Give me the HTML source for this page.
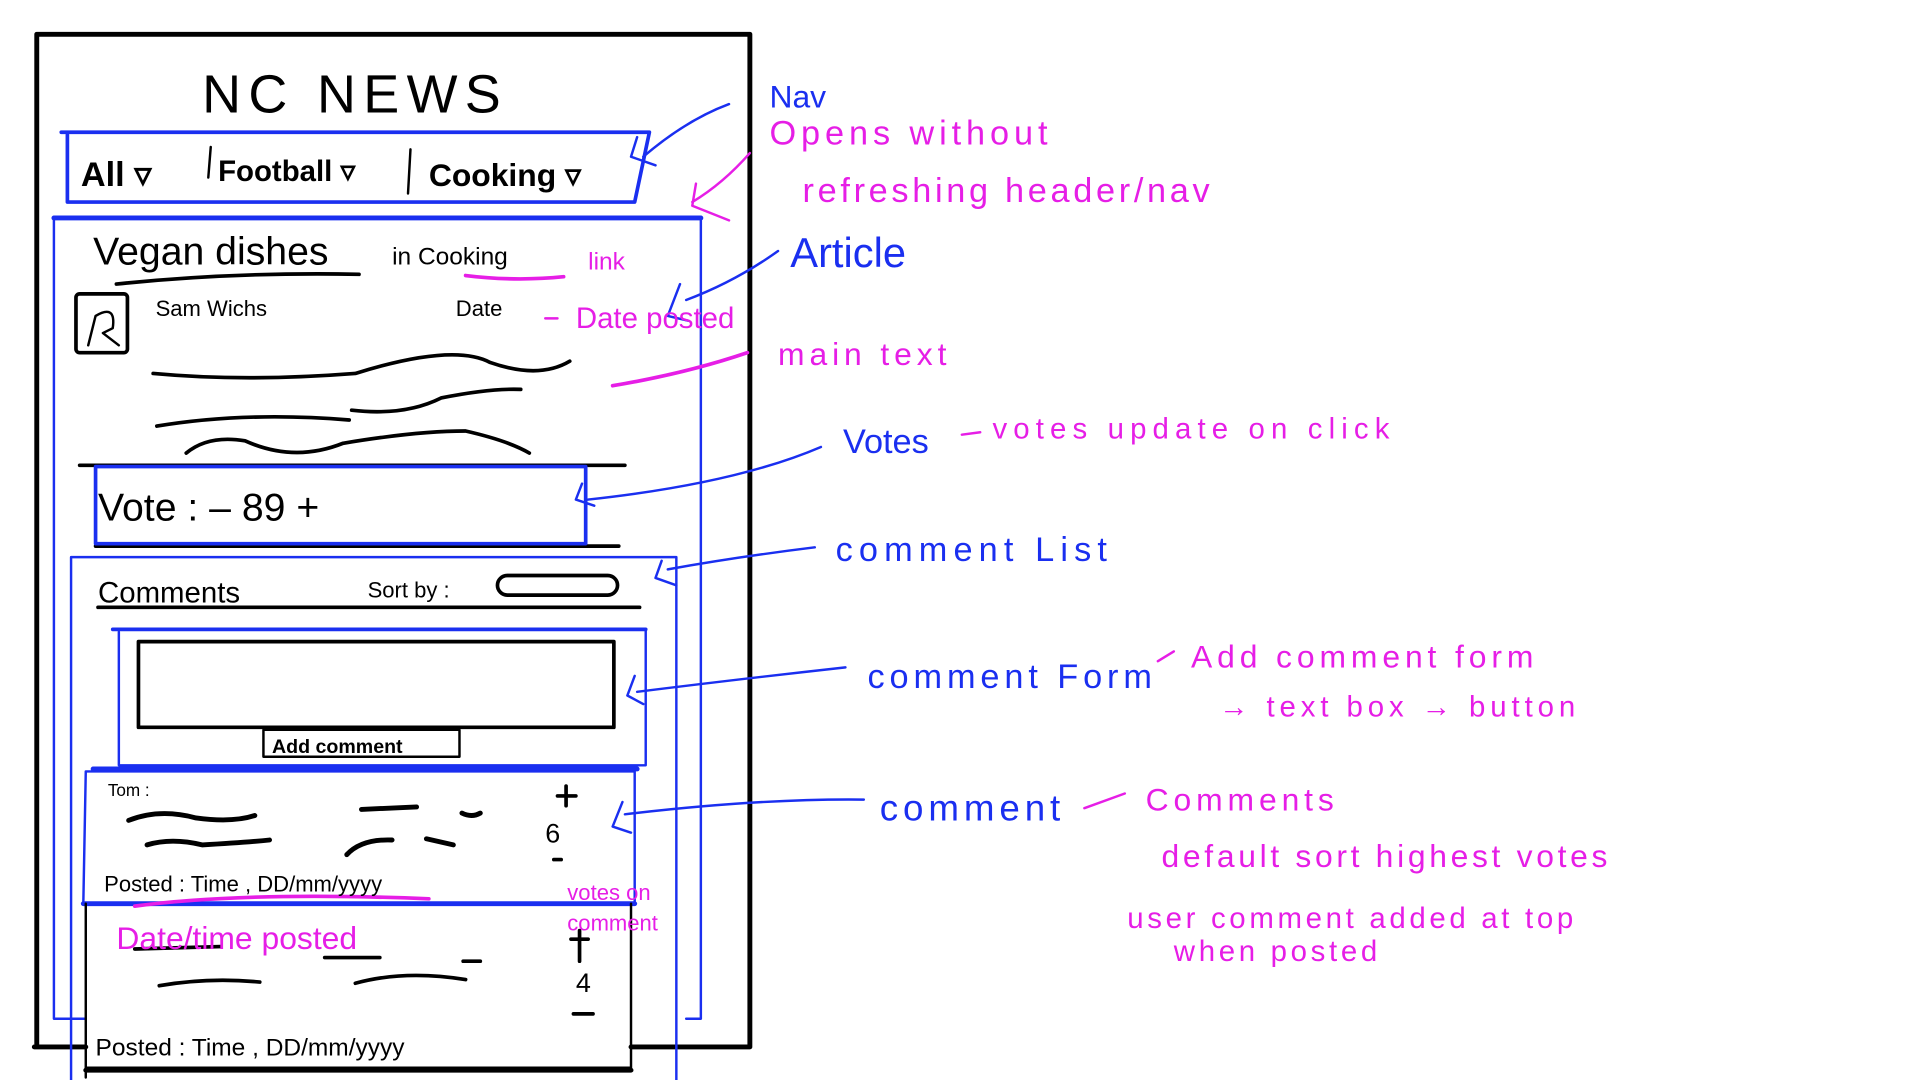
<!DOCTYPE html>
<html><head><meta charset="utf-8"><style>html,body{margin:0;padding:0;background:#fff;overflow:hidden}svg{display:block}
text{font-family:"Liberation Sans",sans-serif}</style></head><body>
<svg width="1920" height="1080" viewBox="0 0 1567 882" preserveAspectRatio="none" xmlns="http://www.w3.org/2000/svg">
<rect width="1567" height="882" fill="#fff"/>
<g fill="none" stroke-linecap="round" stroke-linejoin="round">
<path d="M30 28 L612 28 L612 855 M30 28 L30 855 M28 855 L70 855 M515 855 L612 855" stroke="#000" stroke-width="4"/>
<path d="M50 108 L530 108 L518 165 L55 165 L55 110" stroke="#1a2ff0" stroke-width="3"/>
<path d="M335 122 L333 158 M172 120 L170 145" stroke="#000" stroke-width="2"/>
<path d="M44 178 L572 178 L572 832 M44 178 L44 832 L70 832 M560 832 L572 832" stroke="#1a2ff0" stroke-width="2"/>
<path d="M44 178 L572 178" stroke="#1a2ff0" stroke-width="4"/>
<path d="M95 232 Q190 222 293 224" stroke="#000" stroke-width="3"/>
<path d="M380 225 Q420 230 460 226" stroke="#e61ee6" stroke-width="3"/>
<rect x="62" y="240" width="42" height="48" rx="3" stroke="#000" stroke-width="3"/>
<path d="M72 282 L78 258 Q95 248 92 268 L84 272 L97 282" stroke="#000" stroke-width="2"/>
<path d="M125 305 Q200 312 290 305 Q370 280 400 296 Q440 310 465 295" stroke="#000" stroke-width="3"/>
<path d="M128 348 Q200 336 285 343 M287 335 Q330 340 360 325 Q400 317 425 318" stroke="#000" stroke-width="3"/>
<path d="M152 370 Q170 355 200 360 Q240 378 280 362 Q340 352 380 352 Q415 360 432 370" stroke="#000" stroke-width="3"/>
<path d="M65 380 L510 380 M78 446 L505 446" stroke="#000" stroke-width="3"/>
<path d="M78 381 L478 381 L478 444 L78 444 Z" stroke="#1a2ff0" stroke-width="3"/>
<path d="M58 455 L552 455 L552 882 M58 455 L58 882" stroke="#1a2ff0" stroke-width="2"/>
<path d="M80 496 L522 496" stroke="#000" stroke-width="3"/>
<rect x="406" y="470" width="98" height="16" rx="8" stroke="#000" stroke-width="3"/>
<path d="M92 514 L527 514 L527 625 L97 625 L97 516" stroke="#1a2ff0" stroke-width="2"/>
<path d="M92 514 L527 514" stroke="#1a2ff0" stroke-width="3"/>
<rect x="113" y="524" width="388" height="70" stroke="#000" stroke-width="3"/>
<rect x="215" y="596" width="160" height="22" stroke="#000" stroke-width="2"/>
<path d="M76 628 L520 628" stroke="#1a2ff0" stroke-width="4"/>
<path d="M70 630 L518 630 L518 738 L68 738 L70 630" stroke="#1a2ff0" stroke-width="2"/>
<path d="M68 738 L518 738" stroke="#1a2ff0" stroke-width="4"/>
<path d="M105 670 Q130 660 160 668 Q190 672 208 666 M120 690 Q140 684 165 690 Q200 688 220 686 M295 661 L340 659 M377 664 Q385 668 392 664 M283 698 Q295 685 320 686 M348 685 L370 690" stroke="#000" stroke-width="4"/>
<path d="M110 740 Q200 728 350 734" stroke="#e61ee6" stroke-width="3"/>
<path d="M462 642 L462 658 M455 650 L470 650 M452 702 L458 702" stroke="#000" stroke-width="3"/>
<path d="M70 738 L70 880 M515 738 L515 872 L70 872" stroke="#000" stroke-width="2"/>
<path d="M70 874 L515 874" stroke="#000" stroke-width="4"/>
<path d="M110 775 L180 773 M265 782 L310 782 M378 785 L392 785 M130 805 Q170 798 212 802 M290 803 Q330 792 380 800" stroke="#000" stroke-width="3"/>
<path d="M466 767 L480 767 M473 760 L473 785 M468 828 L484 828" stroke="#000" stroke-width="3"/>
<path d="M595 85 Q560 98 525 128 M520 112 L515 128 L535 135" stroke="#1a2ff0" stroke-width="2"/>
<path d="M635 205 Q600 230 560 245 M555 232 L545 258 L562 262" stroke="#1a2ff0" stroke-width="2"/>
<path d="M670 365 Q600 395 480 408 M475 395 L470 408 L485 413" stroke="#1a2ff0" stroke-width="2"/>
<path d="M665 447 Q600 455 545 465 M540 458 L535 472 L552 478" stroke="#1a2ff0" stroke-width="2"/>
<path d="M690 545 Q600 555 520 565 M518 552 L512 568 L525 575" stroke="#1a2ff0" stroke-width="2"/>
<path d="M705 653 Q620 652 510 665 M508 655 L500 675 L515 680" stroke="#1a2ff0" stroke-width="2"/>
<path d="M612 125 Q590 150 565 165 M568 150 L565 168 L595 180" stroke="#e61ee6" stroke-width="2"/>
<path d="M610 288 Q560 305 500 315" stroke="#e61ee6" stroke-width="3"/>
<path d="M445 260 L455 260 M785 355 L800 353 M945 540 L958 532 M885 660 L918 648" stroke="#e61ee6" stroke-width="2"/>
</g>
<g font-family="Liberation Sans, sans-serif">
<text x="165" y="92" font-size="44" fill="#000" letter-spacing="6">NC NEWS</text>
<text x="66" y="152" font-size="28" fill="#000" font-weight="bold">All ▿</text>
<text x="178" y="148" font-size="24" fill="#000" font-weight="bold">Football ▿</text>
<text x="350" y="152" font-size="26" fill="#000" font-weight="bold">Cooking ▿</text>
<text x="76" y="216" font-size="32" fill="#000">Vegan dishes</text>
<text x="320" y="216" font-size="20" fill="#000">in  Cooking</text>
<text x="480" y="220" font-size="20" fill="#e61ee6">link</text>
<text x="127" y="258" font-size="18" fill="#000">Sam Wichs</text>
<text x="372" y="258" font-size="18" fill="#000">Date</text>
<text x="470" y="268" font-size="24" fill="#e61ee6">Date posted</text>
<text x="80" y="425" font-size="32" fill="#000">Vote :  –   89   +</text>
<text x="80" y="492" font-size="24" fill="#000">Comments</text>
<text x="300" y="488" font-size="18" fill="#000">Sort by :</text>
<text x="222" y="615" font-size="16" fill="#000" font-weight="bold">Add comment</text>
<text x="88" y="650" font-size="14" fill="#000">Tom :</text>
<text x="445" y="688" font-size="22" fill="#000">6</text>
<text x="85" y="728" font-size="18" fill="#000">Posted : Time ,  DD/mm/yyyy</text>
<text x="470" y="810" font-size="22" fill="#000">4</text>
<text x="78" y="862" font-size="20" fill="#000">Posted : Time ,  DD/mm/yyyy</text>
<text x="95" y="775" font-size="26" fill="#e61ee6">Date/time  posted</text>
<text x="463" y="735" font-size="18" fill="#e61ee6">votes on</text>
<text x="463" y="760" font-size="18" fill="#e61ee6">comment</text>
<text x="628" y="88" font-size="26" fill="#1a2ff0">Nav</text>
<text x="628" y="118" font-size="28" fill="#e61ee6" letter-spacing="4">Opens  without</text>
<text x="655" y="165" font-size="28" fill="#e61ee6" letter-spacing="3">refreshing  header/nav</text>
<text x="645" y="218" font-size="34" fill="#1a2ff0">Article</text>
<text x="635" y="298" font-size="26" fill="#e61ee6" letter-spacing="4">main text</text>
<text x="688" y="370" font-size="28" fill="#1a2ff0">Votes</text>
<text x="810" y="358" font-size="24" fill="#e61ee6" letter-spacing="5">votes  update  on  click</text>
<text x="682" y="458" font-size="28" fill="#1a2ff0" letter-spacing="5">comment  List</text>
<text x="708" y="562" font-size="28" fill="#1a2ff0" letter-spacing="4">comment  Form</text>
<text x="972" y="545" font-size="26" fill="#e61ee6" letter-spacing="4">Add  comment  form</text>
<text x="995" y="585" font-size="24" fill="#e61ee6" letter-spacing="4">→ text box → button</text>
<text x="718" y="670" font-size="30" fill="#1a2ff0" letter-spacing="4">comment</text>
<text x="935" y="662" font-size="26" fill="#e61ee6" letter-spacing="4">Comments</text>
<text x="948" y="708" font-size="26" fill="#e61ee6" letter-spacing="3">default sort highest votes</text>
<text x="920" y="758" font-size="24" fill="#e61ee6" letter-spacing="3">user comment added at top</text>
<text x="958" y="785" font-size="24" fill="#e61ee6" letter-spacing="3">when posted</text>
</g>
</svg>
</body></html>
